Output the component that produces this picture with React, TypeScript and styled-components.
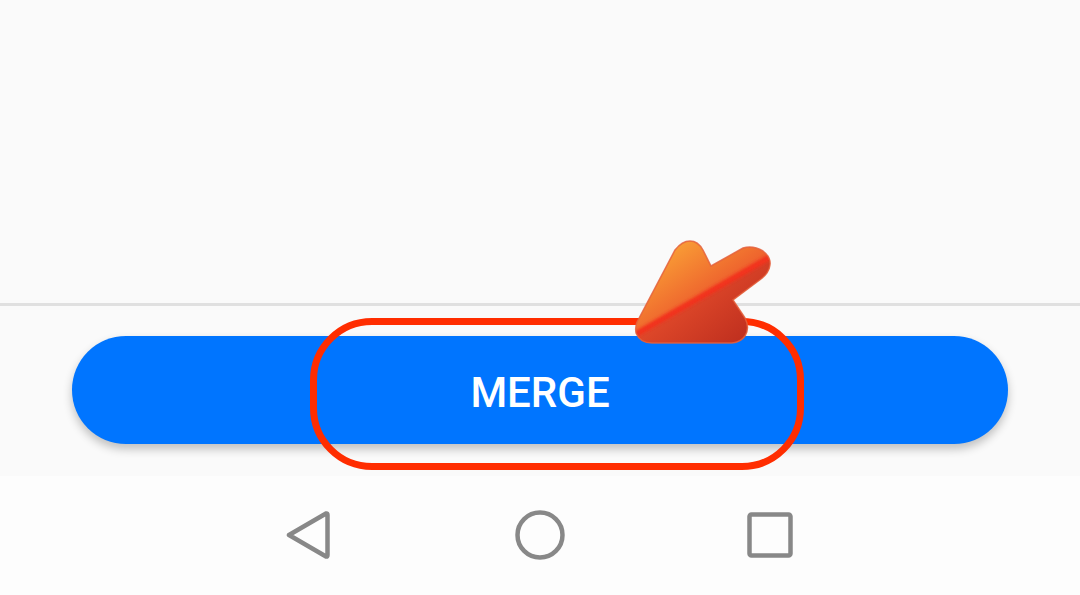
import React from 'react';
import styled, { createGlobalStyle } from 'styled-components';

const GlobalStyle = createGlobalStyle`
  html, body {
    margin: 0;
    padding: 0;
    background: #fafafa;
  }
  #root {
    height: 595px;
  }
`;

const Screen = styled.div`
  width: 1080px;
  height: 595px;
  position: relative;
  overflow: hidden;
  display: flex;
  flex-direction: column;
  background: #fafafa;
  font-family: Roboto, 'Liberation Sans', sans-serif;
`;

const Content = styled.main`
  height: 303px;
`;

const Footer = styled.section`
  height: 173px;
  box-sizing: border-box;
  border-top: 3px solid #e0e0e0;
  padding: 30px 72px 0;
`;

const MergeButton = styled.button`
  position: relative;
  display: block;
  width: 100%;
  height: 108px;
  border: 0;
  padding: 4px 0 0;
  border-radius: 54px;
  background: #0075ff;
  color: #fff;
  font-family: inherit;
  font-size: 42px;
  font-weight: 500;
  letter-spacing: 0;
  box-shadow: 0 5px 10px rgba(0, 0, 0, 0.24);
`;

const Highlight = styled.div`
  position: absolute;
  left: 310px;
  top: 318px;
  width: 494px;
  height: 152px;
  box-sizing: border-box;
  border: 7px solid #ff2d00;
  border-radius: 62px;
`;

const Pointer = styled.svg`
  position: absolute;
  left: 620px;
  top: 230px;
`;

const NavBar = styled.nav`
  flex: 1;
  background: #fdfdfd;
  display: flex;
  align-items: center;
  justify-content: center;
  gap: 182px;
  padding: 0 1px 1px 0;
`;

const NavIcon = styled.svg<{ $offset?: number }>`
  display: block;
  margin-left: ${(p) => p.$offset ?? 0}px;
  fill: none;
  stroke: #888;
  stroke-width: 4.5;
  stroke-linejoin: round;
`;

const ARROW_OUTLINE =
  'M637 322 L675 250 Q682 241 690 241 Q698 241 703 250 L711 266 L743 248 Q753 245 763 251 Q771 257 770 265 Q769 273 761 279 L733 300 L745 318 Q750 328 745 336 Q741 342 732 343 L652 343 Q640 343 636 333 Q635 327 637 322 Z';

const Arrow = () => (
  <Pointer width="170" height="125" viewBox="620 230 170 125">
    <defs>
      <linearGradient id="upper" x1="680" y1="245" x2="725" y2="310" gradientUnits="userSpaceOnUse">
        <stop offset="0" stopColor="#f89a35" />
        <stop offset="1" stopColor="#ea4c2a" />
      </linearGradient>
      <linearGradient id="lower" x1="690" y1="290" x2="735" y2="345" gradientUnits="userSpaceOnUse">
        <stop offset="0" stopColor="#e0492a" />
        <stop offset="1" stopColor="#c0301f" />
      </linearGradient>
      <filter id="soft" x="-10%" y="-30%" width="120%" height="160%">
        <feGaussianBlur stdDeviation="1.6" />
      </filter>
      <clipPath id="shape">
        <path d={ARROW_OUTLINE} />
      </clipPath>
    </defs>
    <g clipPath="url(#shape)">
      <rect x="620" y="230" width="170" height="125" fill="url(#upper)" />
      <path d="M630 336 L775 256 L790 355 L630 355 Z" fill="url(#lower)" />
      <path d="M636 334 L770 257" stroke="#f2301f" strokeWidth="6" filter="url(#soft)" />
    </g>
    <path d={ARROW_OUTLINE} fill="none" stroke="#e4603c" strokeWidth="1.5" opacity="0.85" />
  </Pointer>
);

export default function App() {
  return (
    <Screen>
      <GlobalStyle />
      <Content />
      <Footer>
        <MergeButton>MERGE</MergeButton>
      </Footer>
      <NavBar>
        <NavIcon width="44" height="52" viewBox="0 0 44 52">
          <path d="M3 26 L40 4.500 Q41.500 4 41.500 6 L41.500 46 Q41.500 48 40 47.500 Z" />
        </NavIcon>
        <NavIcon $offset={3} width="50" height="50" viewBox="0 0 50 50">
          <circle cx="25" cy="25" r="22.500" />
        </NavIcon>
        <NavIcon width="46" height="46" viewBox="0 0 46 46">
          <rect x="2.500" y="2.500" width="41" height="41" rx="2" />
        </NavIcon>
      </NavBar>
      <Highlight />
      <Arrow />
    </Screen>
  );
}
